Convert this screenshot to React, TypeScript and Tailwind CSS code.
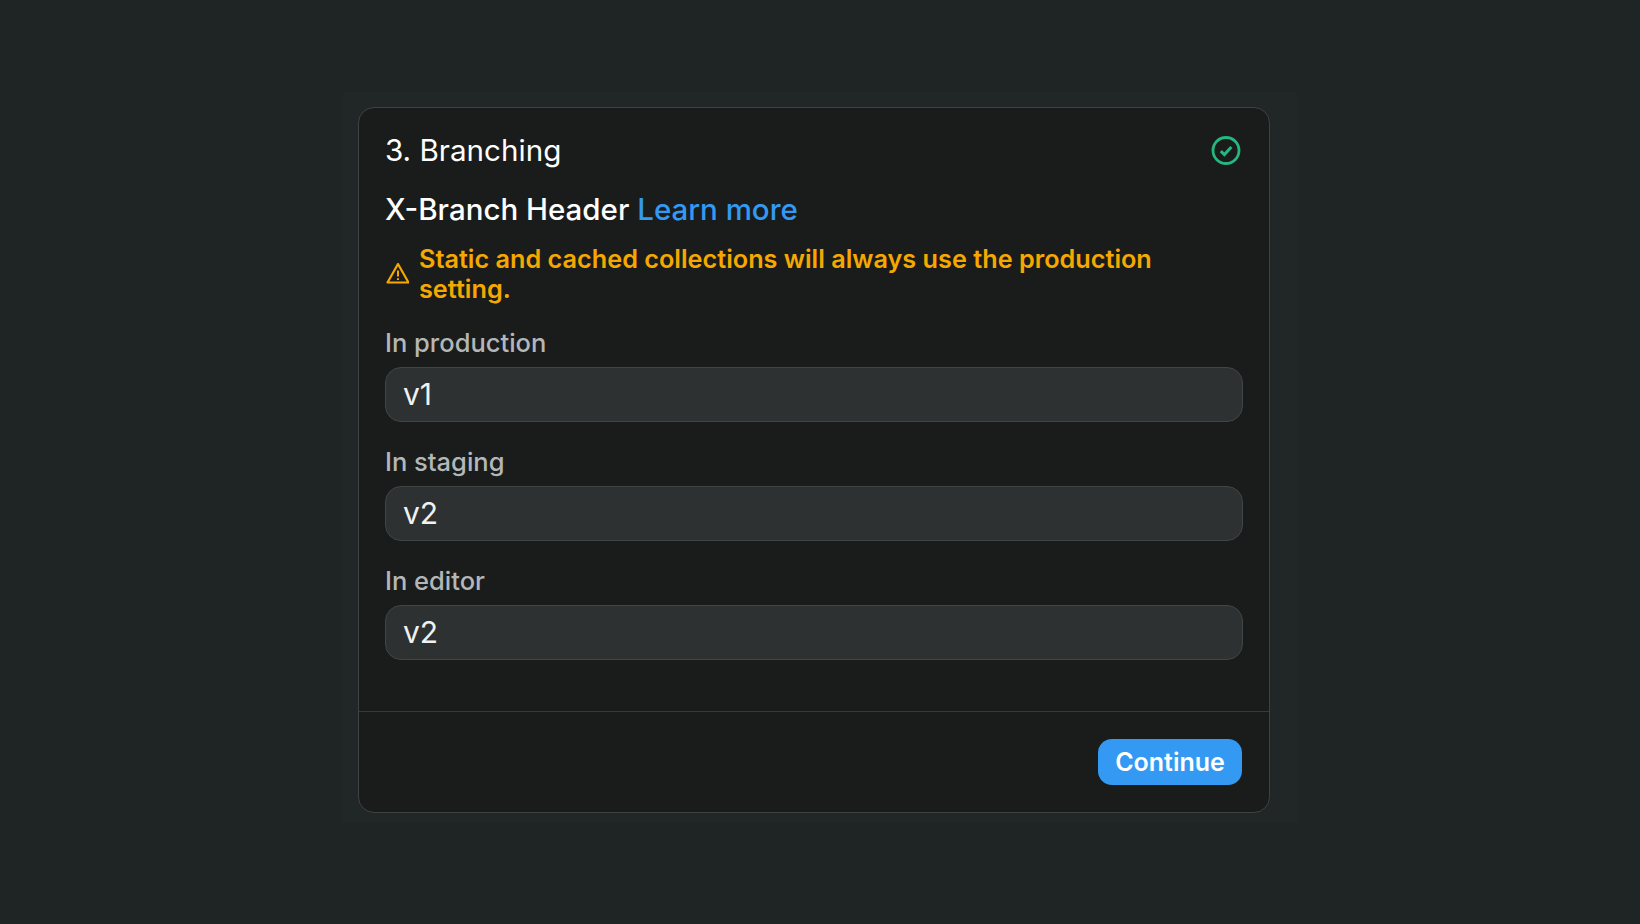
const fields = [
  { label: 'In production', value: 'v1' },
  { label: 'In staging', value: 'v2' },
  { label: 'In editor', value: 'v2' },
];

function CheckIcon() {
  return (
    <svg width="30" height="30" viewBox="0 0 30 30" fill="none" stroke="#26b67f">
      <circle cx="15" cy="15.5" r="13" strokeWidth="2.8" />
      <path d="M9.8 16.1l3.6 3.5 7-7.6" strokeWidth="3" />
    </svg>
  );
}

function WarningIcon() {
  return (
    <svg width="24" height="22" viewBox="0 0 24 22" fill="none" className="shrink-0">
      <path d="M13 1L23.5 19.5H2.5Z" stroke="#f5a800" strokeWidth="2.2" strokeLinejoin="round" />
      <path d="M13 7.5v6M13 15.2v1.8" stroke="#f5a800" strokeWidth="2" />
    </svg>
  );
}

export default function App() {
  return (
    <div className="min-h-[924px] bg-[#1f2425] pt-[92px] pl-[343px] font-['Inter',sans-serif]">
      <div className="w-fit bg-[#212627] pt-[15px] pb-[10px] pl-[15px] pr-[27px]">
        <div className="w-[912px] h-[706px] flex flex-col bg-[#1a1c1c] border border-[#3f4243] rounded-[16px]">
          <div className="flex-1 px-[26px] pt-[22px]">
            <div className="flex items-center justify-between pr-[2px]">
              <h1 className="text-[29.6px] leading-[40px] text-white">3. Branching</h1>
              <CheckIcon />
            </div>
            <p className="mt-[19px] text-[29.5px] leading-[40px] font-medium text-white">
              X-Branch Header <span className="text-[#3399f2]">Learn more</span>
            </p>
            <div className="mt-[15px] flex items-center gap-[10px] pr-[40px]">
              <WarningIcon />
              <p className="text-[25.25px] leading-[30px] font-semibold text-[#f5a800]">
                Static and cached collections will always use the production setting.
              </p>
            </div>
            {fields.map((f, i) => (
              <div key={f.label} className={i === 0 ? 'mt-[24px]' : 'mt-[25px]'}>
                <div className="text-[25.5px] leading-[30px] font-medium text-[#b4b7b8]">{f.label}</div>
                <div className="mt-[9px] h-[55px] flex items-center px-[17px] bg-[#2d3132] border border-[#414546] rounded-[16px] text-[30px] text-[#f0f1f1]">
                  {f.value}
                </div>
              </div>
            ))}
          </div>
          <div className="h-[101px] flex items-center justify-end px-[27px] border-t border-[#38393a]">
            <button className="h-[46px] w-[144px] bg-[#3399f2] rounded-[14px] pt-px text-[25px] font-semibold text-white">
              Continue
            </button>
          </div>
        </div>
      </div>
    </div>
  );
}
